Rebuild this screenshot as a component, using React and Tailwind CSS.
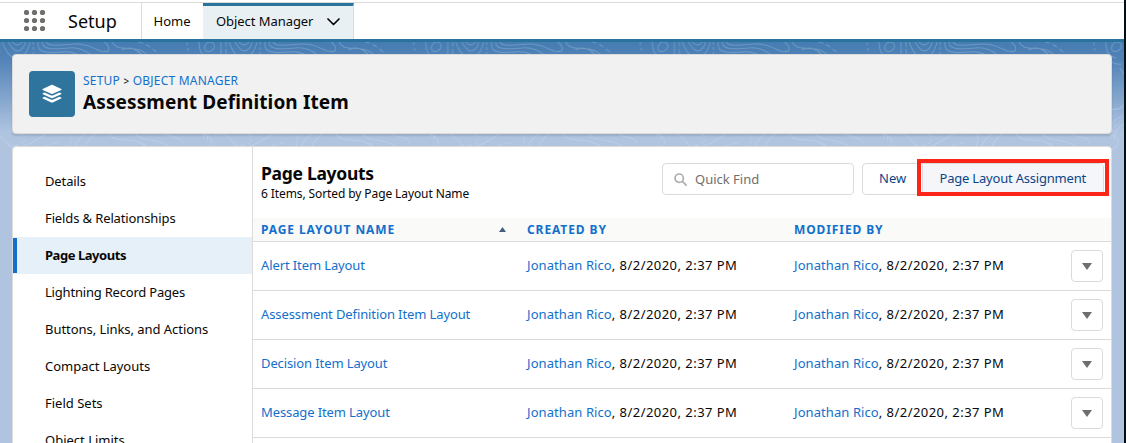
import React from "react";

const rows = ["Alert Item Layout", "Assessment Definition Item Layout", "Decision Item Layout", "Message Item Layout"];
const sidebar = [
  ["Details", "tracking-[-0.12px]"],
  ["Fields & Relationships", "tracking-[-0.12px]"],
  ["Page Layouts", "tracking-[-0.45px]"],
  ["Lightning Record Pages", "tracking-[-0.2px]"],
  ["Buttons, Links, and Actions", "tracking-[-0.05px]"],
  ["Compact Layouts", "tracking-[-0.02px]"],
  ["Field Sets", "tracking-normal"],
  ["Object Limits", "tracking-normal"],
];

function Topography() {
  return (
    <svg className="absolute inset-0" width="1124" height="401" fill="none">
      <defs>
        <pattern id="topo" width="226.7" height="401" patternUnits="userSpaceOnUse" x="185" y="0">
          <g stroke="#ffffff" strokeOpacity="0.2" strokeWidth="1">
            <path d="M14 0 Q14 14 24 16" />
            <path d="M2 0 Q2 10 8 18" strokeDasharray="3 3" />
            <path d="M22 1 C25 -1 31 0 29 6 C26 11 18 11 20 4Z" />
            <path d="M36 0V14" />
            <path d="M41 0V14" strokeDasharray="5 2" />
            <path d="M44 0 Q50 16 58 16 Q68 16 72 0 M50 0 Q56 10 60 9 Q66 7 67 0 M54 0 Q59 6 64 0" />
            <path d="M75 0V14" strokeDasharray="3 2" />
            <path d="M80 0 C78 12 90 11 104 10 C122 8 126 20 136 25 M84 0 C84 9 98 7 110 6 C128 4 132 16 146 20 M88 0 C90 5 103 3 116 2 C136 1 138 12 150 9 Q152 4 146 0" />
            <path d="M154 0 C160 12 176 1 188 12 C194 18 196 20 200 24 M164 8 C174 2 182 10 188 18" />
            <path d="M180 0 C190 2 196 8 202 14" strokeDasharray="5 3" />
            <path d="M12 12 Q20 24 30 22 M28 26 C39 40 42 56 30 65 C24 70 19 65 14 70" />
          </g>
          <g stroke="#ffffff" strokeOpacity="0.15" strokeWidth="1">
            <path d="M18 92 C34 98 26 108 8 112 M30 92 C50 88 45 110 62 105 C83 100 85 86 103 92 M110 91 C118 99 105 106 114 112 M128 91 Q112 102 118 112 M138 91 Q124 102 126 112 M150 91 C158 104 175 92 190 106 M176 90 C180 102 210 94 217 112 M207 92 C218 98 221 93 225 101" />
            <path d="M62 91 C73 96 65 105 50 104 M80 112 Q92 96 104 103" strokeDasharray="6 3" />
            <path d="M42 72 Q18 74 16 92 M42 80 Q24 80 22 98" />
            <path d="M42 76 Q20 78 19 96" strokeDasharray="4 2" />
          </g>
        </pattern>
      </defs>
      <rect width="1124" height="116" fill="url(#topo)" />
    </svg>
  );
}

function Person() {
  return (
    <span className="whitespace-nowrap"><span className="tracking-[0.08px] text-[#1270cc]">Jonathan Rico</span><span className="tracking-[0.46px]">, 8/2/2020, 2:37 PM</span></span>
  );
}

export default function App() {
  return (
    <div className="h-[443px] w-[1126px] overflow-hidden border-r-2 border-[#001014] bg-white font-['Noto_Sans',sans-serif] text-[13px] leading-5 text-[#080707]">
      <header className="flex h-[39px] pt-[2px]">
        <div className="flex w-full border-t border-[#dddbda]">
          <div className="flex w-[142px] shrink-0 items-center border-r border-[#dddbda] pl-6">
            <svg width="22" height="22" fill="#706e6b">
              {[2.5, 10.5, 18.5].map((y) => [2.5, 10.5, 18.5].map((x) => <circle key={`${x}-${y}`} cx={x} cy={y} r="2.6" />))}
            </svg>
            <span className="ml-[22px] pb-px text-[18px]">Setup</span>
          </div>
          <div className="flex w-[61px] shrink-0 items-center pl-[11.5px]">Home</div>
          <div className="flex w-[151px] shrink-0 items-center border-t-[3px] border-r border-t-[#2a739e] border-r-[#dddbda] bg-[#e9f0f4] pb-[3px] pl-[13px]">
            <span className="tracking-[-0.06px]">Object Manager</span>
            <svg className="ml-[14px] mt-0.5" width="13" height="8" fill="none" stroke="#080707" strokeWidth="1.7" strokeLinecap="round" strokeLinejoin="round"><path d="M1 1l5.5 5.5L12 1" /></svg>
          </div>
        </div>
      </header>
      <div className="h-[3px] bg-[#2a739e]" />
      <main className="relative h-[401px] bg-[linear-gradient(180deg,#457cb2_0px,#5585b9_20px,#afc4e0_90px,#b0c4df_100px)] px-3 pt-3">
        <Topography />
        <section className="relative flex h-20 items-start rounded border border-[#dddbda] bg-[#f1f1f1] pt-4 pl-4 shadow-[0_2px_2px_rgba(0,0,0,0.12)]">
          <div className="flex size-[46px] shrink-0 items-center justify-center rounded bg-[#2e749d]">
            <svg width="20" height="20" viewBox="0 0 20 20" fill="white"><path d="M.7 4.9 9.2 1q.8-.3 1.6 0l8.5 3.9q.7.5 0 1L10.8 9.8q-.8.3-1.6 0L.7 5.9q-.7-.5 0-1Z" /><path d="m.8 9.2 1.8-.8 6.1 2.8q1.3.5 2.6 0l6.1-2.8 1.8.8q.7.5 0 1l-8.4 3.9q-.8.3-1.6 0L.8 10.2q-.7-.5 0-1ZM.8 13.5l1.8-.8 6.1 2.8q1.3.5 2.6 0l6.1-2.8 1.8.8q.7.5 0 1l-8.4 3.9q-.8.3-1.6 0L.8 14.5q-.7-.5 0-1Z" /></svg>
          </div>
          <div className="ml-2 flex flex-col">
            <div className="h-5 whitespace-nowrap text-[12px] leading-[20px] tracking-[0.22px]"><span className="text-[#1270cc]">SETUP</span> <span className="text-[10px]">&gt;</span> <span className="text-[#1270cc]">OBJECT MANAGER</span></div>
            <h1 className="text-[19px] font-bold leading-[23px] tracking-[0.11px]">Assessment Definition Item</h1>
          </div>
        </section>
        <section className="relative mt-3 flex h-[320px] rounded border border-[#dddbda] bg-white">
          <nav className="w-60 shrink-0 border-r border-[#dddbda] pt-4">
            {sidebar.map(([name, tracking]) => (
              <div key={name} className={`flex h-[37px] items-center whitespace-nowrap ${tracking} ${name === "Page Layouts" ? "bg-[#e6f0f9] font-bold" : ""}`}>
                <span className={`h-[35px] w-1 ${name === "Page Layouts" ? "bg-[#1270cc]" : ""}`} />
                <span className="ml-7 pb-0.5">{name}</span>
              </div>
            ))}
          </nav>
          <div className="min-w-0 flex-1">
            <div className="flex h-[71px] pt-4 pl-2">
              <div className="w-[401px] shrink-0">
                <h2 className="text-[17.5px] font-bold leading-[20px] tracking-[-0.3px]">Page Layouts</h2>
                <p className="mt-0.5 text-[12px] leading-[18px] tracking-[-0.1px]">6 Items, Sorted by Page Layout Name</p>
              </div>
              <div className="flex h-8 w-[192px] shrink-0 items-center rounded border border-[#dddbda] pl-[11px] text-[#706e6b]">
                <svg width="13" height="13" fill="none" stroke="#b0adab" strokeWidth="1.7" strokeLinecap="round"><circle cx="5.2" cy="5.2" r="4.2" /><path d="m8.6 8.6 3.5 3.5" /></svg>
                <span className="ml-2">Quick Find</span>
              </div>
              <div className="relative ml-2 flex h-8 shrink-0 rounded border border-[#dddbda] text-[#0b4689]">
                <div className="flex w-[59px] items-center pb-0.5 pl-4">New</div>
                <div className="flex w-[181px] items-center rounded-r border-l border-[#dddbda] bg-[#f4f6f9] pb-0.5 pl-[16.5px] tracking-[-0.2px] whitespace-nowrap">Page Layout Assignment</div>
                <div className="absolute -top-[5px] left-[54px] h-[37px] w-[192px] border-4 border-[#fc2618]" />
              </div>
            </div>
            <div className="flex h-6 items-center border-b border-[#dddbda] bg-[#fafaf9] pl-2 text-[12px] font-bold tracking-[0.9px] text-[#1270cc]">
              <div className="flex w-[266px] items-center justify-between pr-[21px]"><span>PAGE LAYOUT NAME</span><svg width="7" height="5" fill="#44607a"><path d="M3.5 0 7 5H0Z" /></svg></div>
              <div className="w-[267px]">CREATED BY</div>
              <div>MODIFIED BY</div>
            </div>
            {rows.map((name) => (
              <div key={name} className="flex h-[49px] items-center border-b border-[#dddbda] pl-2">
                <div className="w-[266px] pb-0.5 tracking-[-0.11px] text-[#1270cc]">{name}</div>
                <div className="w-[267px] pb-0.5"><Person /></div>
                <div className="w-[277px] pb-0.5"><Person /></div>
                <div className="flex size-8 shrink-0 items-center justify-center rounded border border-[#dddbda]"><svg width="10" height="7" fill="#706e6b"><path d="M0 0H10L5 7Z" /></svg></div>
              </div>
            ))}
          </div>
        </section>
      </main>
    </div>
  );
}
